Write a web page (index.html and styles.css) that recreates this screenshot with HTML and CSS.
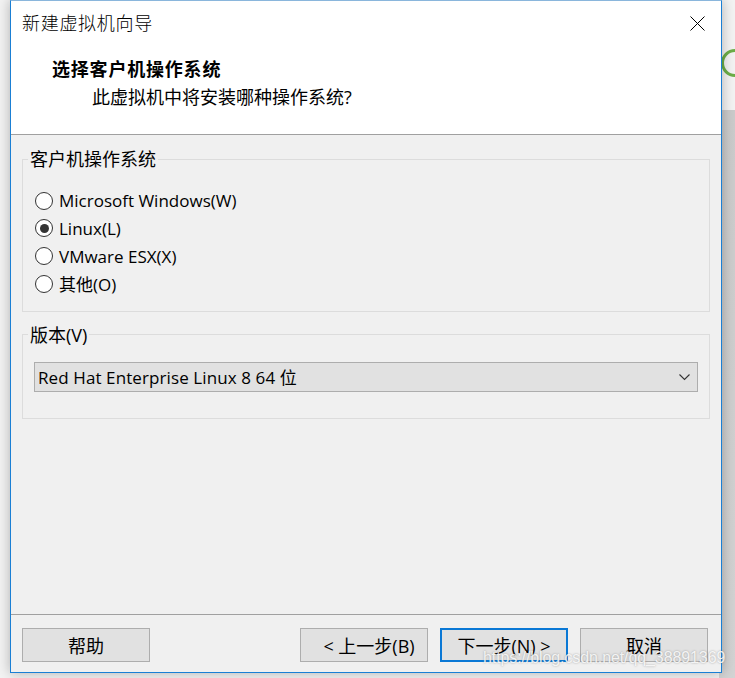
FILE: index.html
```html
<!DOCTYPE html>
<html lang="zh-CN">
<head>
<meta charset="utf-8">
<title>新建虚拟机向导</title>
<link rel="stylesheet" href="styles.css">
</head>
<body>
<div class="desk">
  <div class="ring"></div>
  <div class="dialog">
    <div class="header">
      <div class="titlebar">
        <span class="title">新建虚拟机向导</span>
        <svg class="close" width="15" height="15" viewBox="0 0 15 15"><path d="M0.5 0.5 L14.5 14.5 M14.5 0.5 L0.5 14.5" stroke="#000" stroke-width="1" fill="none"/></svg>
      </div>
      <div class="heading">选择客户机操作系统</div>
      <div class="subheading">此虚拟机中将安装哪种操作系统?</div>
    </div>
    <div class="body">
      <fieldset class="group group-os">
        <legend>客户机操作系统</legend>
        <div class="radio-row"><span class="radio"></span><span>Microsoft Windows(W)</span></div>
        <div class="radio-row"><span class="radio checked"><span class="dot"></span></span><span>Linux(L)</span></div>
        <div class="radio-row"><span class="radio"></span><span>VMware ESX(X)</span></div>
        <div class="radio-row"><span class="radio"></span><span>其他(O)</span></div>
      </fieldset>
      <fieldset class="group group-ver">
        <legend>版本(V)</legend>
        <div class="select">
          <span>Red Hat Enterprise Linux 8 64 位</span>
          <svg class="chev" width="11" height="7" viewBox="0 0 11 7"><path d="M0.5 0.5 L5.5 5.5 L10.5 0.5" stroke="#333" stroke-width="1.1" fill="none"/></svg>
        </div>
      </fieldset>
    </div>
    <div class="footer">
      <div class="btn">帮助</div>
      <div class="spacer"></div>
      <div class="btn btn-l">&lt; 上一步(B)</div>
      <div class="btn primary">下一步(N) &gt;</div>
      <div class="btn">取消</div>
    </div>
  </div>
  <div class="watermark">https://blog.csdn.net/qq_38891369</div>
</div>
</body>
</html>
```
FILE: styles.css
```css
html, body {
  margin: 0;
  padding: 0;
}
body {
  width: 735px;
  height: 678px;
  overflow: hidden;
  background:
    linear-gradient(to bottom, rgba(0,0,0,0) 0, rgba(0,0,0,0) 110px, #cbcbcb 110px, #d3d3d3 100%) right top / 16px 100% no-repeat,
    #f3f3f3;
  font-family: "Open Sans", "Noto Sans CJK SC", sans-serif;
  font-size: 17px;
  color: #000;
}
.desk {
  position: relative;
  width: 735px;
  height: 678px;
  padding-left: 10px;
  box-sizing: border-box;
}
.ring {
  position: absolute;
  left: 721px;
  top: 49px;
  width: 28px;
  height: 28px;
  box-sizing: border-box;
  border: 3px solid #6cae48;
  border-radius: 50%;
}
.dialog {
  position: relative;
  width: 712px;
  height: 673px;
  box-sizing: border-box;
  border: 1px solid #1a7fd4;
  border-top-color: #8ab6dc;
  background: #f0f0f0;
  display: flex;
  flex-direction: column;
  box-shadow: 0 0 12px rgba(0, 0, 0, 0.28);
}
.header {
  background: #fff;
  height: 134px;
  box-sizing: border-box;
  border-bottom: 1px solid #a0a0a0;
  flex: none;
  font-size: 18px;
}
.titlebar {
  height: 44px;
  display: flex;
  align-items: center;
  padding: 0 16px 0 11px;
}
.title {
  flex: 1;
  line-height: 24px;
  font-weight: 300;
  letter-spacing: 0.7px;
}
.close {
  display: block;
  margin-top: 1px;
}
.heading {
  margin-top: 12px;
  padding-left: 41px;
  line-height: 24px;
  font-weight: 700;
  letter-spacing: 0.8px;
}
.subheading {
  margin-top: 4px;
  padding-left: 81px;
  line-height: 24px;
}
.body {
  flex: 1;
  padding: 13px 11px 0 11px;
  display: flex;
  flex-direction: column;
}
.group {
  margin: 0;
  border: 1px solid #dcdcdc;
  min-width: 0;
}
.group legend {
  margin-left: -6px;
  padding: 0 2px;
  line-height: 22px;
  height: 22px;
  font-size: 18px;
}
.group-os {
  padding: 17px 11px 13px 11px;
}
.group-ver {
  margin-top: 12px;
  padding: 16px 11px 26px 11px;
}
.radio-row {
  height: 27.67px;
  display: flex;
  align-items: center;
  gap: 6px;
}
.radio {
  width: 18px;
  height: 18px;
  box-sizing: border-box;
  margin-left: 1px;
  border: 1px solid #333;
  border-radius: 50%;
  background: #fff;
  display: flex;
  align-items: center;
  justify-content: center;
}
.dot {
  width: 9px;
  height: 9px;
  border-radius: 50%;
  background: #333;
}
.select {
  height: 30px;
  box-sizing: border-box;
  border: 1px solid #adadad;
  background: #e1e1e1;
  display: flex;
  align-items: center;
  padding: 0 7px 0 3px;
}
.select span {
  flex: 1;
  letter-spacing: 0.1px;
}
.chev {
  display: block;
  margin-top: 1px;
}
.footer {
  flex: none;
  border-top: 1px solid #a0a0a0;
  padding: 13px 13px 10px 11px;
  display: flex;
  gap: 12px;
  font-size: 18px;
}
.spacer {
  flex: 1;
  margin-left: -12px;
}
.btn {
  width: 128px;
  height: 34px;
  box-sizing: border-box;
  border: 1px solid #adadad;
  background: #e1e1e1;
  display: flex;
  align-items: center;
  justify-content: center;
}
.btn-l {
  padding-left: 10px;
}
.btn.primary {
  border: 2px solid #0a78d5;
}
.watermark {
  position: absolute;
  left: 483px;
  top: 648px;
  font-family: "Liberation Sans", Arial, sans-serif;
  font-size: 16px;
  line-height: 20px;
  color: rgba(255, 255, 255, 0.85);
  text-shadow: 0 0 2px rgba(90, 90, 90, 0.55);
  letter-spacing: -0.1px;
  white-space: nowrap;
}
```
